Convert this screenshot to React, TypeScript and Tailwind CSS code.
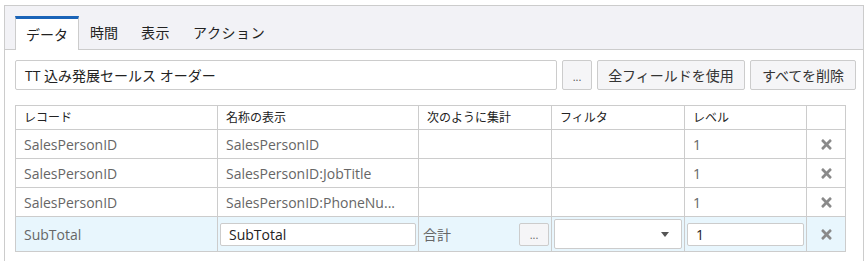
import { FC } from "react";
import { FaTimes } from "react-icons/fa";

const font = "font-['Open_Sans','Noto_Sans_CJK_JP',sans-serif]";

const rows = [
  { record: "SalesPersonID", name: "SalesPersonID" },
  { record: "SalesPersonID", name: "SalesPersonID:JobTitle" },
  { record: "SalesPersonID", name: "SalesPersonID:PhoneNu..." },
];

const RemoveIcon: FC = () => (
  <div className="flex items-center justify-center text-[#8a8a8a] text-[15px]">
    <FaTimes />
  </div>
);

const App: FC = () => {
  return (
    <div className={`w-[867px] h-[261px] bg-white overflow-hidden pt-[5px] pl-[4px] ${font}`}>
      <div className="w-[860px] h-[260px] border-t border-x border-[#cccccc]">
        {/* tab bar */}
        <div className="h-[44px] bg-[#f2f2f6] border-b border-[#cccccc] flex items-end pl-[10px]">
          <div className="h-[34px] w-[64px] bg-white border-x border-[#cccccc] border-t-[3px] border-t-[#1a64b8] -mb-px flex items-center justify-center text-[14px] text-[#222]">
            データ
          </div>
          <div className="h-[33px] flex items-center pl-[11px] pr-[11px] text-[14px] text-[#222]">時間</div>
          <div className="h-[33px] flex items-center px-[12px] text-[14px] text-[#222] tracking-[0.5px]">表示</div>
          <div className="h-[33px] flex items-center px-[11px] text-[14px] text-[#222] tracking-[0.6px]">アクション</div>
        </div>

        <div className="pl-[10px] pt-[10px]">
          {/* source row */}
          <div className="flex items-center h-[30px]">
            <div className="w-[542px] h-[30px] border border-[#cccccc] rounded-[2px] flex items-center pl-[9px] text-[14px] text-[#222]">
              TT 込み発展セールス オーダー
            </div>
            <button className="ml-[5px] w-[30px] h-[30px] border border-[#cccccc] rounded-[2px] bg-[#f5f5f7] text-[11px] text-[#555] flex items-center justify-center pt-[4px]">
              ...
            </button>
            <button className="ml-[5px] w-[148px] h-[30px] border border-[#cccccc] rounded-[2px] bg-[#f5f5f7] text-[14px] text-[#333] flex items-center justify-center">
              全フィールドを使用
            </button>
            <button className="ml-[5px] w-[106px] h-[30px] border border-[#cccccc] rounded-[2px] bg-[#f5f5f7] text-[14px] text-[#333] flex items-center justify-center">
              すべてを削除
            </button>
          </div>

          {/* table */}
          <table className="mt-[15px] border-collapse table-fixed w-[830px]">
            <colgroup>
              <col className="w-[202px]" />
              <col className="w-[201px]" />
              <col className="w-[133px]" />
              <col className="w-[133px]" />
              <col className="w-[122px]" />
              <col className="w-[39px]" />
            </colgroup>
            <thead>
              <tr className="h-[24px] text-[12px] text-[#222] text-left">
                <th className="border border-[#cccccc] font-normal pl-[8px]">レコード</th>
                <th className="border border-[#cccccc] font-normal pl-[8px]">名称の表示</th>
                <th className="border border-[#cccccc] font-normal pl-[8px]">次のように集計</th>
                <th className="border border-[#cccccc] font-normal pl-[8px]">フィルタ</th>
                <th className="border border-[#cccccc] font-normal pl-[8px]">レベル</th>
                <th className="border border-[#cccccc] font-normal"></th>
              </tr>
            </thead>
            <tbody className="text-[14px] text-[#666]">
              {rows.map((r, i) => (
                <tr key={i} className="h-[29px]">
                  <td className="border border-[#cccccc] pl-[8px]">{r.record}</td>
                  <td className="border border-[#cccccc] pl-[8px]">{r.name}</td>
                  <td className="border border-[#cccccc]"></td>
                  <td className="border border-[#cccccc]"></td>
                  <td className="border border-[#cccccc] pl-[8px]">1</td>
                  <td className="border border-[#cccccc]">
                    <RemoveIcon />
                  </td>
                </tr>
              ))}
              <tr className="h-[35px] bg-[#e8f6fd]">
                <td className="border border-[#cccccc] pl-[8px]">SubTotal</td>
                <td className="border border-[#cccccc] px-[2px]">
                  <div className="h-[23px] w-[196px] bg-white border border-[#cccccc] rounded-[2px] flex items-center pl-[8px] text-[#222]">
                    SubTotal
                  </div>
                </td>
                <td className="border border-[#cccccc] pl-[4px] pr-[2px]">
                  <div className="flex items-center justify-between">
                    <span>合計</span>
                    <div className="w-[30px] h-[23px] border border-[#cccccc] rounded-[2px] bg-[#f5f5f7] text-[11px] flex items-center justify-center pt-[3px]">
                      ...
                    </div>
                  </div>
                </td>
                <td className="border border-[#cccccc] px-[2px]">
                  <div className="h-[30px] bg-white border border-[#cccccc] rounded-[2px] flex items-center justify-end pr-[12px]">
                    <svg width="8" height="5" viewBox="0 0 8 5">
                      <path d="M0 0 H8 L4 5 Z" fill="#555" />
                    </svg>
                  </div>
                </td>
                <td className="border border-[#cccccc] px-[2px]">
                  <div className="h-[23px] bg-white border border-[#cccccc] rounded-[2px] flex items-center pl-[8px] text-[#222]">
                    1
                  </div>
                </td>
                <td className="border border-[#cccccc]">
                  <RemoveIcon />
                </td>
              </tr>
            </tbody>
          </table>
        </div>
      </div>
    </div>
  );
};

export default App;
